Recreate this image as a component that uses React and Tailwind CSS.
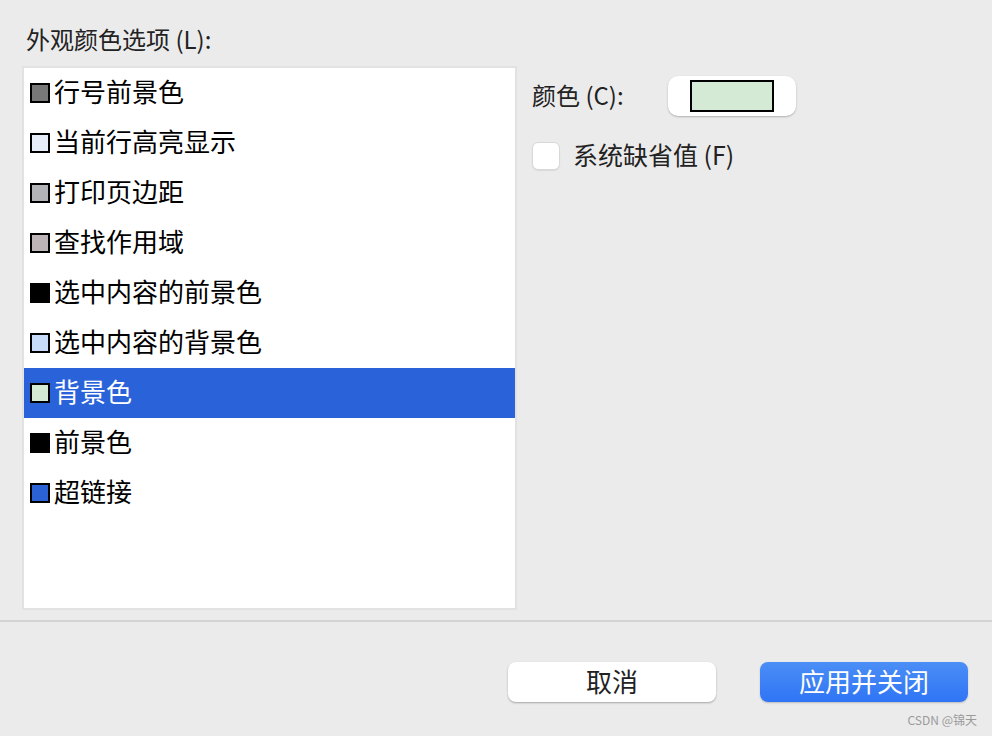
import React from "react";

const items = [
  { name: "行号前景色", color: "bg-[#787878]" },
  { name: "当前行高亮显示", color: "bg-[#e8eef9]" },
  { name: "打印页边距", color: "bg-[#b1b3b6]" },
  { name: "查找作用域", color: "bg-[#bcb4b6]" },
  { name: "选中内容的前景色", color: "bg-black" },
  { name: "选中内容的背景色", color: "bg-[#c6dbf7]" },
  { name: "背景色", color: "bg-[#d4ead4]", selected: true },
  { name: "前景色", color: "bg-black" },
  { name: "超链接", color: "bg-[#2b63d6]" },
];

const font = { fontFamily: '"Noto Sans CJK SC", "Noto Sans", sans-serif' };

export default function App() {
  return (
    <div className="w-[992px] h-[736px] bg-[#ebebeb] flex flex-col text-[#1d1d1d] overflow-hidden" style={font}>
      <div className="flex flex-col px-[22px] pt-[20px]">
        <div className="pl-1 text-[24px] leading-[38px] h-[46px] text-[#222]">外观颜色选项 (L):</div>
        <div className="flex gap-[15px]">
          {/* list */}
          <div className="w-[495px] h-[544px] border-2 border-[#e2e2e2] bg-white flex flex-col">
            {items.map((it) => (
              <div
                key={it.name}
                className={
                  "h-[50px] flex items-center pl-[6px] " +
                  (it.selected ? "bg-[#2a63d9] text-white" : "text-black")
                }
              >
                <span className={"w-[20px] h-[20px] border-2 border-black mr-[4px] " + it.color}></span>
                <span className="text-[26px] leading-none mb-[4px]">{it.name}</span>
              </div>
            ))}
          </div>
          {/* right side */}
          <div className="flex flex-col pt-[10px]">
            <div className="flex items-center h-[40px]">
              <span className="text-[24px] w-[136px] text-[#222] mb-[2px]">颜色 (C):</span>
              <div className="w-[128px] h-[40px] bg-white rounded-[10px] shadow-[0_1px_2px_rgba(0,0,0,0.25)] flex items-center justify-center">
                <div className="w-[84px] h-[32px] border-2 border-black bg-[#d4ead4]"></div>
              </div>
            </div>
            <div className="flex items-center mt-[26px] h-[28px]">
              <div className="w-[28px] h-[28px] bg-white rounded-[6px] border border-[#d8d8d8] shadow-[0_1px_1px_rgba(0,0,0,0.08)]"></div>
              <span className="ml-[13px] text-[25px] text-[#222] mb-[2px]">系统缺省值 (F)</span>
            </div>
          </div>
        </div>
      </div>
      <div className="mt-[10px] h-[2px] bg-[#d3d3d3]"></div>
      <div className="flex justify-end gap-[44px] pr-[24px] pt-[40px]">
        <button className="w-[208px] h-[40px] bg-white rounded-[8px] shadow-[0_1px_2px_rgba(0,0,0,0.3)] text-[26px] text-[#222] flex items-center justify-center">
          <span className="mb-[3px]">取消</span>
        </button>
        <button className="w-[208px] h-[40px] rounded-[8px] bg-gradient-to-b from-[#4b8ef6] to-[#2f74f5] shadow-[0_1px_2px_rgba(0,0,0,0.2)] text-[26px] text-white flex items-center justify-center">
          <span className="mb-[3px]">应用并关闭</span>
        </button>
      </div>
      <div className="flex justify-end pr-[15px] pt-[9px]">
        <span className="text-[12px] text-[#9a9a9a]">CSDN @锦天</span>
      </div>
    </div>
  );
}
